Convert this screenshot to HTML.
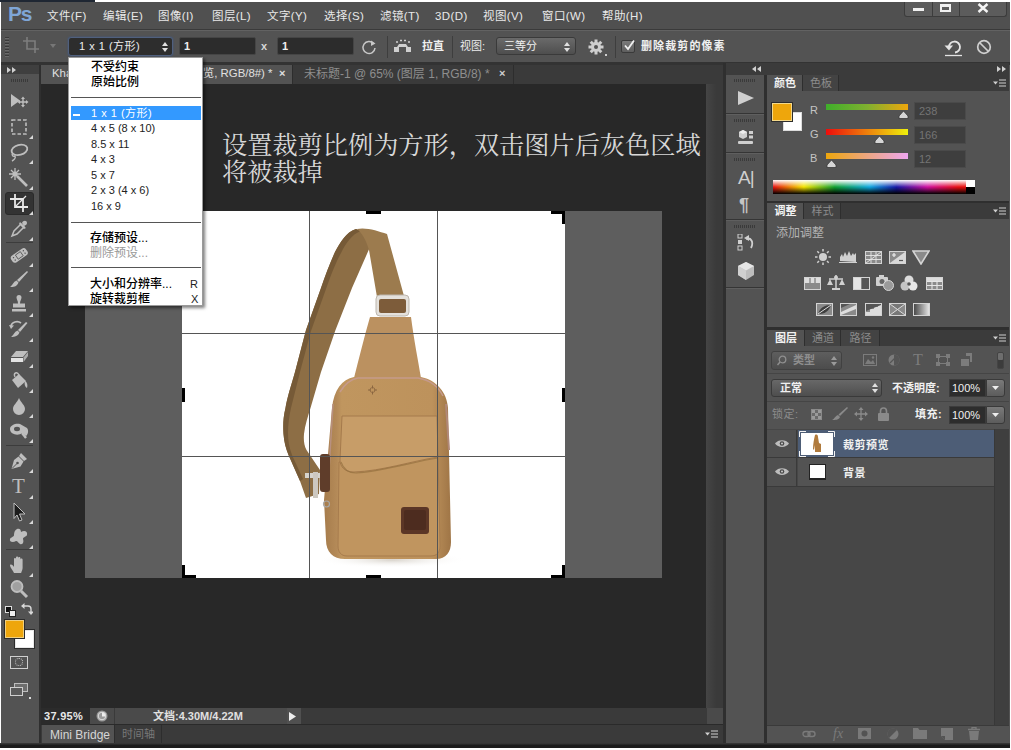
<!DOCTYPE html>
<html><head><meta charset="utf-8">
<style>
*{box-sizing:border-box;margin:0;padding:0}
html,body{width:1011px;height:750px;overflow:hidden;background:#fff}
body{font-family:"Liberation Sans","Noto Sans CJK SC",sans-serif;font-size:11px;color:#e6e6e6;position:relative}
.a{position:absolute}
.t{position:absolute;white-space:nowrap;line-height:1}
#app{position:absolute;left:1px;top:2px;width:1009px;height:741px;background:#535353;overflow:hidden}
/* coordinates inside #app are offset by (-1,-2); use wrapper to keep page coords */
#p{position:absolute;left:-1px;top:-2px;width:1011px;height:750px}
.m{top:11px;font-size:11.5px;letter-spacing:.4px;color:#e8e8e8}
.c{font-size:12px;font-weight:500;color:#000}
</style></head><body>
<div id="app"><div id="p">
<!--MENUBAR-->
<div class="a" id="menubar" style="left:1px;top:2px;width:1009px;height:27px;background:#505050"></div>
<div class="a" style="left:1px;top:29px;width:1009px;height:1px;background:#3a3a3a"></div>
<!--MENUCONTENT-->
<div class="t" style="left:8px;top:3px;font-size:21px;font-weight:bold;color:#7fa6d6;letter-spacing:-1.2px;font-family:'Liberation Sans',sans-serif">Ps</div>
<div class="t m" style="left:47px">文件(F)</div>
<div class="t m" style="left:103px">编辑(E)</div>
<div class="t m" style="left:158px">图像(I)</div>
<div class="t m" style="left:212px">图层(L)</div>
<div class="t m" style="left:267px">文字(Y)</div>
<div class="t m" style="left:324px">选择(S)</div>
<div class="t m" style="left:380px">滤镜(T)</div>
<div class="t m" style="left:435px">3D(D)</div>
<div class="t m" style="left:483px">视图(V)</div>
<div class="t m" style="left:542px">窗口(W)</div>
<div class="t m" style="left:602px">帮助(H)</div>
<!-- window buttons -->
<div class="a" style="left:904px;top:2px;width:103px;height:15px;background:#5c5c5c;border:1px solid #3c3c3c;border-top:none;border-radius:0 0 3px 3px"></div>
<div class="a" style="left:932px;top:2px;width:1px;height:15px;background:#3c3c3c"></div>
<div class="a" style="left:959px;top:2px;width:1px;height:15px;background:#3c3c3c"></div>
<div class="a" style="left:913px;top:8px;width:11px;height:3px;background:#f0f0f0"></div>
<div class="a" style="left:940px;top:4px;width:11px;height:8px;border:2px solid #f0f0f0;border-top-width:3px"></div>
<svg class="a" style="left:977px;top:3px" width="12" height="10" viewBox="0 0 12 10"><path d="M1.5 1 L10.5 9 M10.5 1 L1.5 9" stroke="#f4f4f4" stroke-width="2.4" fill="none"/></svg>
<!--OPTIONS-->
<div class="a" id="optbar" style="left:1px;top:30px;width:1009px;height:32px;background:#535353;border-top:1px solid #626262"></div>
<div class="a" style="left:1px;top:62px;width:1009px;height:3px;background:#333"></div>
<!--OPTCONTENT-->
<div class="a" style="left:5px;top:36px;width:4px;height:22px;background:repeating-linear-gradient(#535353 0 1px,#3a3a3a 1px 2px,#6a6a6a 2px 3px)"></div>
<svg class="a" style="left:22px;top:36px" width="18" height="18" viewBox="0 0 18 18"><path d="M5 1 V13 H17 M1 5 H13 V17" stroke="#7d7d7d" stroke-width="1.6" fill="none"/></svg>
<svg class="a" style="left:50px;top:44px" width="6" height="4"><path d="M0 0H6L3 4Z" fill="#777"/></svg>
<div class="a" style="left:68px;top:37px;width:105px;height:19px;background:#2d2d2d;border:1px solid #50607e;border-radius:3px;box-shadow:0 0 2px #3d5a8a"></div>
<div class="t" style="left:79px;top:41px;font-size:11px;letter-spacing:.5px;color:#ededed">1 x 1 (方形)</div>
<svg class="a" style="left:162px;top:42px" width="6" height="10"><path d="M0 4L3 0L6 4ZM0 6L3 10L6 6Z" fill="#e0e0e0"/></svg>
<div class="a" style="left:179px;top:37px;width:77px;height:18px;background:#2c2c2c;border:1px solid #454545;border-radius:2px"></div>
<div class="t" style="left:184px;top:41px;font-size:11px;font-weight:bold;color:#f0f0f0">1</div>
<div class="t" style="left:261px;top:41px;font-size:11px;font-weight:bold;color:#d8d8d8">x</div>
<div class="a" style="left:277px;top:37px;width:77px;height:18px;background:#2c2c2c;border:1px solid #454545;border-radius:2px"></div>
<div class="t" style="left:282px;top:41px;font-size:11px;font-weight:bold;color:#f0f0f0">1</div>
<svg class="a" style="left:361px;top:39px" width="16" height="16" viewBox="0 0 16 16"><path d="M12.5 4.5 A6 6 0 1 0 14 9" stroke="#c8c8c8" stroke-width="1.5" fill="none"/><path d="M10 1.5 L14.5 4.5 L10 7Z" fill="#c8c8c8"/></svg>
<div class="a" style="left:387px;top:36px;width:1px;height:22px;background:#3e3e3e"></div>
<svg class="a" style="left:393px;top:39px" width="19" height="15" viewBox="0 0 19 15"><path d="M1 13V8h3l2-3h7l2 3h3v5z" fill="#cfcfcf"/><rect x="6" y="8" width="7" height="5" fill="#535353"/><path d="M3 3h2M7 1.500h2M11 1.500h2M15 3h2" stroke="#cfcfcf" stroke-width="1.500"/></svg>
<div class="t" style="left:422px;top:41px;font-size:11px;font-weight:bold;color:#f0f0f0">拉直</div>
<div class="a" style="left:452px;top:36px;width:1px;height:22px;background:#3e3e3e"></div>
<div class="t" style="left:460px;top:41px;font-size:11px;color:#ececec">视图:</div>
<div class="a" style="left:496px;top:37px;width:80px;height:18px;background:linear-gradient(#6a6a6a,#4e4e4e);border:1px solid #3a3a3a;border-radius:3px"></div>
<div class="t" style="left:504px;top:41px;font-size:11px;color:#f0f0f0">三等分</div>
<svg class="a" style="left:564px;top:42px" width="6" height="10"><path d="M0 4L3 0L6 4ZM0 6L3 10L6 6Z" fill="#e0e0e0"/></svg>
<svg class="a" style="left:588px;top:39px" width="16" height="16" viewBox="-8 -8 16 16"><g fill="#cfcfcf"><circle r="5"/><g id="gt"><rect x="-1.500" y="-7.500" width="3" height="15"/></g><use href="#gt" transform="rotate(45)"/><use href="#gt" transform="rotate(90)"/><use href="#gt" transform="rotate(135)"/></g><circle r="2" fill="#535353"/></svg>
<div class="a" style="left:605px;top:54px;width:2px;height:2px;background:#cfcfcf"></div>
<div class="a" style="left:615px;top:36px;width:1px;height:22px;background:#3e3e3e"></div>
<div class="a" style="left:621px;top:40px;width:14px;height:13px;background:linear-gradient(#7a7a7a,#5e5e5e);border:1px solid #3a3a3a;border-radius:2px"></div>
<svg class="a" style="left:622px;top:39px" width="14" height="13" viewBox="0 0 14 13"><path d="M3 6.500L6 10L12 1.500" stroke="#f0f0f0" stroke-width="1.800" fill="none"/></svg>
<div class="t" style="left:641px;top:41px;font-size:11px;font-weight:bold;letter-spacing:1.1px;color:#f0f0f0">删除裁剪的像素</div>
<svg class="a" style="left:943px;top:38px" width="20" height="19" viewBox="0 0 20 19"><path d="M6 9 A5.500 5.500 0 1 1 12 14.500" stroke="#e4e4e4" stroke-width="1.800" fill="none"/><path d="M1.500 7.500H10L6 12.500Z" fill="#e4e4e4"/><path d="M2 17.500H19" stroke="#e4e4e4" stroke-width="1.300"/></svg>
<svg class="a" style="left:976px;top:39px" width="16" height="16" viewBox="0 0 16 16"><circle cx="8" cy="8" r="6.300" stroke="#cfcfcf" stroke-width="1.700" fill="none"/><path d="M3.500 3.500L12.500 12.500" stroke="#cfcfcf" stroke-width="1.700"/></svg>
<!--TOOLBAR-->
<div class="a" id="toolbar" style="left:1px;top:65px;width:38px;height:680px;background:#535353"></div>
<div class="a" style="left:39px;top:65px;width:2px;height:680px;background:#2f2f2f"></div>
<!--TOOLCONTENT-->
<div class="a" style="left:1px;top:65px;width:38px;height:9px;background:#3f3f3f"></div>
<svg class="a" style="left:7px;top:67px" width="9" height="6"><path d="M0 0L4 3L0 6ZM5 0L9 3L5 6Z" fill="#d0d0d0"/></svg>
<div class="a" style="left:11px;top:79px;width:18px;height:3px;background:repeating-linear-gradient(90deg,#3a3a3a 0 1px,#535353 1px 2px)"></div>
<svg class="a" style="left:9px;top:91px" width="20" height="20" viewBox="0 0 20 20" fill="#bebebe" stroke="none"><path d="M2 3L11 9.500L2 16Z"/><path d="M14 7v8M10 11h8" stroke="#bebebe" stroke-width="1.400"/><path d="M14 5.500l-2 2.500h4zM14 16.500l-2-2.500h4zM8.500 11l2.500-2v4zM19.500 11l-2.500-2v4z"/></svg>
<svg class="a" style="left:9px;top:117px" width="20" height="20" viewBox="0 0 20 20" fill="#bebebe" stroke="none"><rect x="3" y="3" width="14" height="14" fill="none" stroke="#bebebe" stroke-width="1.600" stroke-dasharray="3.500 2"/></svg>
<svg class="a" style="left:29px;top:135px" width="4" height="4"><path d="M4 0V4H0Z" fill="#d8d8d8"/></svg>
<svg class="a" style="left:9px;top:142px" width="20" height="20" viewBox="0 0 20 20" fill="#bebebe" stroke="none"><ellipse cx="10.500" cy="8" rx="8" ry="5" fill="none" stroke="#bebebe" stroke-width="1.800" transform="rotate(-15 10 8)"/><path d="M4 11c-2 2 0 4 2 3c1 2-1 4-3 5" fill="none" stroke="#bebebe" stroke-width="1.400"/></svg>
<svg class="a" style="left:29px;top:160px" width="4" height="4"><path d="M4 0V4H0Z" fill="#d8d8d8"/></svg>
<svg class="a" style="left:9px;top:168px" width="20" height="20" viewBox="0 0 20 20" fill="#bebebe" stroke="none"><path d="M8 8L18 18" stroke="#bebebe" stroke-width="2.600"/><path d="M6 0v12M0 6h12M2 2l8 8M10 2l-8 8" stroke="#bebebe" stroke-width="1.300"/><circle cx="6" cy="6" r="2.500"/></svg>
<svg class="a" style="left:29px;top:186px" width="4" height="4"><path d="M4 0V4H0Z" fill="#d8d8d8"/></svg>
<div class="a" style="left:5px;top:192px;width:29px;height:23px;background:#333;border-radius:3px;border:1px solid #2a2a2a"></div>
<svg class="a" style="left:9px;top:193px" width="20" height="20" viewBox="0 0 20 20" fill="#bebebe" stroke="none"><path d="M6 1V14H19M1 6H14V19" stroke="#e8e8e8" stroke-width="1.800" fill="none"/><path d="M17 3L7 13" stroke="#e8e8e8" stroke-width="1.200"/></svg>
<svg class="a" style="left:29px;top:211px" width="4" height="4"><path d="M4 0V4H0Z" fill="#d8d8d8"/></svg>
<svg class="a" style="left:9px;top:219px" width="20" height="20" viewBox="0 0 20 20" fill="#bebebe" stroke="none"><path d="M3 17L5 12L12 5L15 8L8 15Z" fill="none" stroke="#bebebe" stroke-width="1.500"/><path d="M11 3l6 6l-2 1l-5-5zM13 4c1-3 5-3 5 0c0 2-2 2-3 3z"/></svg>
<svg class="a" style="left:29px;top:237px" width="4" height="4"><path d="M4 0V4H0Z" fill="#d8d8d8"/></svg>
<div class="a" style="left:6px;top:242px;width:27px;height:1px;background:#3c3c3c"></div>
<svg class="a" style="left:9px;top:245px" width="20" height="20" viewBox="0 0 20 20" fill="#bebebe" stroke="none"><rect x="1" y="6.500" width="18" height="8" rx="3" transform="rotate(-35 10 10)"/><g fill="#535353" transform="rotate(-35 10 10)"><rect x="7" y="8" width="6" height="5" fill="none" stroke="#535353" stroke-width=".8"/><circle cx="4" cy="9" r=".7"/><circle cx="4" cy="12" r=".7"/><circle cx="16" cy="9" r=".7"/><circle cx="16" cy="12" r=".7"/></g></svg>
<svg class="a" style="left:29px;top:263px" width="4" height="4"><path d="M4 0V4H0Z" fill="#d8d8d8"/></svg>
<svg class="a" style="left:9px;top:270px" width="20" height="20" viewBox="0 0 20 20" fill="#bebebe" stroke="none"><path d="M18 1L19 2L10 12L8 10Z"/><path d="M7.500 10.500L9.500 12.500C8 17 4 17 1 17C4 15 4 12 7.500 10.500Z"/></svg>
<svg class="a" style="left:29px;top:288px" width="4" height="4"><path d="M4 0V4H0Z" fill="#d8d8d8"/></svg>
<svg class="a" style="left:9px;top:295px" width="20" height="20" viewBox="0 0 20 20" fill="#bebebe" stroke="none"><path d="M7.500 2.500a2.500 2.500 0 1 1 5 0c0 2-1.500 3-1.500 6h5v4h-12v-4h5c0-3-1.500-4-1.500-6z"/><rect x="3" y="14" width="14" height="2.500"/></svg>
<svg class="a" style="left:29px;top:313px" width="4" height="4"><path d="M4 0V4H0Z" fill="#d8d8d8"/></svg>
<svg class="a" style="left:9px;top:320px" width="20" height="20" viewBox="0 0 20 20" fill="#bebebe" stroke="none"><path d="M17 2L18.500 3L11 12L9 10Z"/><path d="M8.500 10.500L10.500 12.500C9 16 6 17 2 17C5 15 5 12 8.500 10.500Z"/><path d="M2 6a6 5 0 0 1 10-3" fill="none" stroke="#bebebe" stroke-width="1.600"/><path d="M0 5l5 .5l-3 3.500z"/></svg>
<svg class="a" style="left:29px;top:338px" width="4" height="4"><path d="M4 0V4H0Z" fill="#d8d8d8"/></svg>
<svg class="a" style="left:9px;top:346px" width="20" height="20" viewBox="0 0 20 20" fill="#bebebe" stroke="none"><path d="M7 5H19L14 11H2Z"/><path d="M2 12H14V16H2Z" fill="#e2e2e2"/><path d="M14.500 11.500L19 6V10L14.500 16Z" fill="#aaa"/></svg>
<svg class="a" style="left:29px;top:364px" width="4" height="4"><path d="M4 0V4H0Z" fill="#d8d8d8"/></svg>
<svg class="a" style="left:9px;top:371px" width="20" height="20" viewBox="0 0 20 20" fill="#bebebe" stroke="none"><path d="M3 9L10 3L17 10L9 17Z"/><path d="M6 6c-2-4 2-6 4-2" fill="none" stroke="#bebebe" stroke-width="1.400"/><path d="M16 10c2 1 3 4 2 7c-2-1-3-4-2-7z"/></svg>
<svg class="a" style="left:29px;top:389px" width="4" height="4"><path d="M4 0V4H0Z" fill="#d8d8d8"/></svg>
<svg class="a" style="left:9px;top:396px" width="20" height="20" viewBox="0 0 20 20" fill="#bebebe" stroke="none"><path d="M10 2C12 7 16 9 16 13a6 6 0 0 1-12 0C4 9 8 7 10 2Z"/></svg>
<svg class="a" style="left:29px;top:414px" width="4" height="4"><path d="M4 0V4H0Z" fill="#d8d8d8"/></svg>
<svg class="a" style="left:9px;top:421px" width="20" height="20" viewBox="0 0 20 20" fill="#bebebe" stroke="none"><path d="M1 8c0-4 6-6 10-5l7 4c2 2 1 7-1 8l-4-3c-3 3-12 2-12-4z"/><ellipse cx="8" cy="8" rx="3" ry="2.200" fill="#535353"/><path d="M13 12l4 5" stroke="#bebebe" stroke-width="2.400"/></svg>
<svg class="a" style="left:29px;top:439px" width="4" height="4"><path d="M4 0V4H0Z" fill="#d8d8d8"/></svg>
<div class="a" style="left:6px;top:445px;width:27px;height:1px;background:#3c3c3c"></div>
<svg class="a" style="left:9px;top:451px" width="20" height="20" viewBox="0 0 20 20" fill="#bebebe" stroke="none"><path d="M12 2l6 6l-3 2l-5-5z"/><path d="M9.500 5.500l5 5l-3 5l-9 2.500l2.500-9z"/><path d="M3 17.500l5-5" stroke="#535353" stroke-width="1"/><circle cx="8.500" cy="12" r="1.300" fill="#535353"/></svg>
<svg class="a" style="left:29px;top:469px" width="4" height="4"><path d="M4 0V4H0Z" fill="#d8d8d8"/></svg>
<div class="t" style="left:12px;top:476px;font-family:'Liberation Serif',serif;font-size:21px;color:#bebebe">T</div>
<svg class="a" style="left:29px;top:495px" width="4" height="4"><path d="M4 0V4H0Z" fill="#d8d8d8"/></svg>
<svg class="a" style="left:9px;top:502px" width="20" height="20" viewBox="0 0 20 20" fill="#bebebe" stroke="none"><path d="M5 1L16 12H10.500L13 18L10.500 19L8 13L5 16.500Z" fill="#1c1c1c" stroke="#bebebe" stroke-width="1"/></svg>
<svg class="a" style="left:29px;top:520px" width="4" height="4"><path d="M4 0V4H0Z" fill="#d8d8d8"/></svg>
<svg class="a" style="left:9px;top:527px" width="20" height="20" viewBox="0 0 20 20" fill="#bebebe" stroke="none"><path d="M8 2c2-1 4 0 4 3c3-2 7-1 6 3c-1 2-4 2-4 4c1 3 0 6-3 5c-2-1-2-3-4-3c-3 2-7 1-6-2c1-2 4-2 4-4c0-3 1-5 3-6z"/></svg>
<svg class="a" style="left:29px;top:545px" width="4" height="4"><path d="M4 0V4H0Z" fill="#d8d8d8"/></svg>
<div class="a" style="left:6px;top:549px;width:27px;height:1px;background:#3c3c3c"></div>
<svg class="a" style="left:9px;top:555px" width="20" height="20" viewBox="0 0 20 20" fill="#bebebe" stroke="none"><path d="M5 18c-1-3-4-5-4-8c1-1 3 0 4 2V4c0-1.500 2-1.500 2 0V2.500c0-1.500 2.200-1.500 2.200 0V3c0-1.500 2.200-1.500 2.200 0V4.500c0-1.500 2.200-1.500 2.200 0V13c0 2-1 3-1.500 5z"/></svg>
<svg class="a" style="left:29px;top:573px" width="4" height="4"><path d="M4 0V4H0Z" fill="#d8d8d8"/></svg>
<svg class="a" style="left:9px;top:579px" width="20" height="20" viewBox="0 0 20 20" fill="#bebebe" stroke="none"><circle cx="8" cy="7.500" r="5.500" fill="#a0a0a0" stroke="#bebebe" stroke-width="1.800"/><path d="M12 12l6 6" stroke="#bebebe" stroke-width="3"/></svg>
<div class="a" style="left:5px;top:606px;width:7px;height:7px;background:#111;border:1px solid #ddd"></div><div class="a" style="left:9px;top:610px;width:7px;height:7px;background:#eee;border:1px solid #222"></div>
<svg class="a" style="left:21px;top:603px" width="12" height="12" viewBox="0 0 12 12"><path d="M2 3h5a3 3 0 0 1 3 3v3" fill="none" stroke="#d8d8d8" stroke-width="1.400"/><path d="M3.500 0L0 3l3.500 3zM7 8.500l3 3.500l3-3.500z" fill="#d8d8d8"/></svg>
<div class="a" style="left:15px;top:630px;width:19px;height:18px;background:#fff;border:1px solid #e8e8e8;box-shadow:0 0 0 1px #2c2c2c"></div>
<div class="a" style="left:5px;top:620px;width:19px;height:18px;background:#eea60c;border:1px solid #f0d080;box-shadow:0 0 0 1px #2c2c2c"></div>
<div class="a" style="left:10px;top:656px;width:18px;height:13px;border:1px solid #cfcfcf"></div><div class="a" style="left:15px;top:658px;width:8px;height:8px;border:1px dotted #cfcfcf;border-radius:50%"></div>
<div class="a" style="left:14px;top:683px;width:14px;height:9px;border:1px solid #bdbdbd;background:#6e6e6e"></div><div class="a" style="left:10px;top:687px;width:13px;height:9px;border:1px solid #cfcfcf;background:#5a5a5a"></div><div class="a" style="left:29px;top:697px;width:2px;height:2px;background:#ddd"></div>
<!--TABROW-->
<div class="a" id="tabrow" style="left:41px;top:65px;width:682px;height:19px;background:#3a3a3a"></div>
<!--TABCONTENT-->
<div class="a" style="left:41px;top:65px;width:252px;height:19px;background:#535353;border-right:1px solid #2d2d2d"></div>
<div class="t" style="left:52px;top:68px;font-size:11.4px;color:#e0e0e0">Khaki bag.jpg @ 38% (裁剪预览, RGB/8#) *</div>
<div class="t" style="left:279px;top:68px;font-size:11px;font-weight:bold;color:#e0e0e0">×</div>
<div class="t" style="left:304px;top:68px;font-size:12px;color:#8e8e8e">未标题-1 @ 65% (图层 1, RGB/8) *</div>
<div class="t" style="left:499px;top:68px;font-size:11px;font-weight:bold;color:#d0d0d0">×</div>
<div class="a" style="left:513px;top:65px;width:1px;height:19px;background:#2d2d2d"></div>
<!--CANVAS-->
<div class="a" id="canvas" style="left:41px;top:84px;width:665px;height:624px;background:#282828"></div>
<div class="a" id="vscroll" style="left:706px;top:84px;width:17px;height:624px;background:linear-gradient(90deg,#454545,#3a3a3a 60%)"></div>
<!--CANVASCONTENT-->
<div class="t" style="left:222px;top:132px;font-family:'Liberation Serif','Noto Serif CJK SC',serif;font-size:25.2px;line-height:27px;color:#d8d8d8;white-space:pre">设置裁剪比例为方形，双击图片后灰色区域
将被裁掉</div>
<div class="a" style="left:85px;top:211px;width:577px;height:367px;background:#5e5e5e"></div>
<div class="a" style="left:182px;top:211px;width:383px;height:367px;background:#fff"></div>
<svg class="a" style="left:182px;top:211px" width="383" height="367" viewBox="182 211 383 367">
<defs>
<linearGradient id="gb" x1="0" x2="1" y1="0" y2="0"><stop offset="0" stop-color="#a67c4c"/><stop offset=".1" stop-color="#b48a58"/><stop offset=".14" stop-color="#c0965f"/><stop offset=".85" stop-color="#bd925c"/><stop offset="1" stop-color="#9f7546"/></linearGradient>
<radialGradient id="sh" cx=".5" cy=".5" r=".5"><stop offset="0" stop-color="#d9d4cc"/><stop offset="1" stop-color="#fff" stop-opacity="0"/></radialGradient>
</defs>
<ellipse cx="392" cy="560" rx="75" ry="8" fill="url(#sh)"/>
<!-- left strap -->
<path d="M356 229 C346 232 340 243 335 252 C330 263 325 276 321 288 L306 330 L295 372 C291 386 287 398 285.500 408 C283 418 283 426 283.500 434 C284 442 286 449 288.500 455 L300 481 L306 498 L319 494 L320 470 L306.500 450 C304 445 303.500 440 304 434 C305 425 308 416 310.500 408 L321 372 L335.500 330 L352 288 L370 247 L372 236 Z" fill="#8d6e45"/>
<path d="M356 229 C346 232 340 243 335 252 C330 263 325 276 321 288 L306 330 L295 372 C291 386 287 398 285.500 408 C283 418 283 426 283.500 434 C284 442 286 449 288.500 455 L300 481 L303 479 L292 455 C289 447 288 440 288 433 C288 425 289 417 291 408 L300 372 L311 331 L326 289 C331 275 336 262 341 253 C346 243 352 234 361 231 Z" fill="#765a37"/>
<!-- right strap -->
<path d="M357 229 C366 227 378 231 387 234 L404 296 L377 297 L369 250 C366 240 362 233 357 229Z" fill="#9c7b4e"/>
<!-- buckle -->
<rect x="376" y="295" width="33" height="21" rx="4" fill="#e4e1dc" stroke="#bdb7ae" stroke-width="1"/>
<rect x="379" y="299" width="27" height="14" rx="2" fill="#7d5c3a"/>
<!-- neck -->
<path d="M370 317 L411 317 C414 340 418 360 421 378 L354 378 C359 358 364 338 370 317Z" fill="#bb9160"/>
<!-- body -->
<path d="M354 377 C342 379 334 390 332 408 L324 500 L326 540 C326 552 333 559 345 559 L436 559 C446 559 451 552 451 542 L448 408 C447 392 436 380 421 377 Z" fill="url(#gb)"/>
<path d="M340 392 C346 382 352 379 358 378 L418 378 C430 380 438 386 443 396" stroke="#c59a8c" stroke-width="1.500" fill="none"/>
<path d="M333 404 L329 470" stroke="#b89080" stroke-width="1.500" fill="none"/>
<path d="M446 404 L449 450" stroke="#b08878" stroke-width="2" fill="none"/>
<!-- front pocket -->
<path d="M339 462 L338 546 C338 552 341 556 347 556 L431 556 C437 556 440 552 440 546 L438 455 Z" fill="#c0955f" stroke="#a67b4d" stroke-width="1"/>
<!-- flap -->
<path d="M342 416 L437 416 L438 457 C412 461 382 471 354 472 C345 472 340 467 340 460 Z" fill="#c79d68" stroke="#a57a4c" stroke-width="1"/>
<path d="M341 462 C344 471 350 473 356 473 C384 471 412 462 438 458" stroke="#94703f" stroke-width="1.200" fill="none" opacity=".7"/>
<!-- label -->
<rect x="401" y="507" width="28" height="27" rx="3" fill="#5b3626"/>
<rect x="404" y="510" width="22" height="20" rx="2" fill="#4d2c1f"/>
<!-- lower buckle -->
<rect x="320" y="454" width="10" height="38" rx="3" fill="#5f3d2a"/>
<rect x="305" y="473" width="15" height="5" fill="#d6d3cd"/>
<rect x="313" y="472" width="5" height="26" fill="#cdc8c0"/>
<circle cx="326.500" cy="504" r="3" fill="none" stroke="#a8a8a8" stroke-width="1.200"/>
<!-- small emblem -->
<path d="M368 390h3m3 0h3M372.500 385.500v3m0 3v3" stroke="#8a6640" stroke-width="1"/><circle cx="372.500" cy="390" r="2.500" fill="none" stroke="#8a6640" stroke-width=".8"/>
</svg>
<!-- grid -->
<div class="a" style="left:309px;top:211px;width:1px;height:367px;background:#555"></div>
<div class="a" style="left:437px;top:211px;width:1px;height:367px;background:#555"></div>
<div class="a" style="left:182px;top:333px;width:383px;height:1px;background:#555"></div>
<div class="a" style="left:182px;top:456px;width:383px;height:1px;background:#555"></div>
<!-- handles -->
<div class="a" style="left:182px;top:211px;width:14px;height:3px;background:#000"></div><div class="a" style="left:182px;top:211px;width:3px;height:13px;background:#000"></div>
<div class="a" style="left:551px;top:211px;width:14px;height:3px;background:#000"></div><div class="a" style="left:562px;top:211px;width:3px;height:13px;background:#000"></div>
<div class="a" style="left:182px;top:575px;width:14px;height:3px;background:#000"></div><div class="a" style="left:182px;top:565px;width:3px;height:13px;background:#000"></div>
<div class="a" style="left:551px;top:575px;width:14px;height:3px;background:#000"></div><div class="a" style="left:562px;top:565px;width:3px;height:13px;background:#000"></div>
<div class="a" style="left:366px;top:211px;width:15px;height:3px;background:#000"></div>
<div class="a" style="left:366px;top:575px;width:15px;height:3px;background:#000"></div>
<div class="a" style="left:182px;top:388px;width:3px;height:14px;background:#000"></div>
<div class="a" style="left:562px;top:388px;width:3px;height:14px;background:#000"></div>
<!--STATUS-->
<div class="a" id="status" style="left:41px;top:708px;width:682px;height:16px;background:#3a3a3a"></div>
<div class="a" id="minib" style="left:41px;top:725px;width:682px;height:19px;background:#3a3a3a"></div>
<div class="a" style="left:41px;top:708px;width:49px;height:16px;background:#2b2b2b"></div><div class="a" style="left:90px;top:708px;width:24px;height:16px;background:#4a4a4a"></div>
<div class="t" style="left:44px;top:711px;font-size:11px;font-weight:bold;color:#e8e8e8;letter-spacing:.3px">37.95%</div>
<svg class="a" style="left:96px;top:710px" width="12" height="12" viewBox="0 0 12 12"><circle cx="6" cy="6" r="5.500" fill="#9a9a9a"/><path d="M6 2V6.500H9.500A3.500 3.500 0 0 0 6 2Z" fill="#eee"/><circle cx="6" cy="6" r="3.800" fill="none" stroke="#ddd" stroke-width="1"/></svg>
<div class="a" style="left:115px;top:708px;width:172px;height:16px;background:#4a4a4a"></div><div class="a" style="left:287px;top:708px;width:14px;height:16px;background:#505050"></div>
<div class="t" style="left:153px;top:711px;font-size:11px;font-weight:bold;color:#e0e0e0">文档:4.30M/4.22M</div>
<svg class="a" style="left:289px;top:712px" width="7" height="9"><path d="M0 0L7 4.500L0 9Z" fill="#eee"/></svg>

<div class="a" style="left:41px;top:724px;width:682px;height:1px;background:#2a2a2a"></div>
<div class="a" style="left:42px;top:725px;width:72px;height:19px;background:#535353"></div><div class="a" style="left:114px;top:725px;width:1px;height:19px;background:#2d2d2d"></div>
<div class="t" style="left:50px;top:729px;font-size:12px;color:#d6d6d6">Mini Bridge</div>
<div class="t" style="left:122px;top:729px;font-size:11px;color:#787878">时间轴</div>
<div class="a" style="left:161px;top:725px;width:1px;height:19px;background:#2d2d2d"></div>
<div class="a" style="left:707px;top:708px;width:16px;height:16px;background:#4a4a4a"></div>
<svg class="a" style="left:705px;top:730px" width="13" height="8" viewBox="0 0 13 8"><path d="M0 2.500H5L2.500 5.500Z" fill="#d0d0d0"/><path d="M6 1H13M6 4H13M6 7H13" stroke="#d0d0d0" stroke-width="1.200"/></svg>
<!--DOCK-->
<div class="a" id="dock" style="left:726px;top:63px;width:38px;height:682px;background:#535353"></div>
<div class="a" style="left:723px;top:63px;width:3px;height:682px;background:#2f2f2f"></div>
<div class="a" style="left:764px;top:63px;width:3px;height:682px;background:#2f2f2f"></div>
<!--DOCKCONTENT-->
<div class="a" style="left:726px;top:63px;width:283px;height:12px;background:#3b3b3b"></div>
<svg class="a" style="left:752px;top:66px" width="9" height="6"><path d="M4 0L0 3L4 6ZM9 0L5 3L9 6Z" fill="#d0d0d0"/></svg>
<svg class="a" style="left:997px;top:66px" width="9" height="6"><path d="M0 0L4 3L0 6ZM5 0L9 3L5 6Z" fill="#d0d0d0"/></svg>
<div class="a" style="left:734px;top:79px;width:22px;height:3px;background:repeating-linear-gradient(90deg,#3a3a3a 0 1px,#535353 1px 2px)"></div>
<svg class="a" style="left:738px;top:91px" width="16" height="14"><path d="M0 0L16 7L0 14Z" fill="#cfcfcf"/></svg>
<div class="a" style="left:726px;top:113px;width:38px;height:1px;background:#353535"></div><div class="a" style="left:726px;top:114px;width:38px;height:1px;background:#5f5f5f"></div>
<div class="a" style="left:734px;top:119px;width:22px;height:3px;background:repeating-linear-gradient(90deg,#3a3a3a 0 1px,#535353 1px 2px)"></div>
<svg class="a" style="left:738px;top:129px" width="16" height="16" viewBox="0 0 16 16" fill="#cfcfcf"><path d="M5 1L9 3V8L5 10L1 8V3Z"/><path d="M5 1L9 3L5 5L1 3Z" fill="#eee"/><rect x="11" y="2" width="4" height="3"/><rect x="11" y="6.500" width="4" height="3"/><rect x="0" y="12" width="15" height="3" rx="1"/></svg>
<div class="a" style="left:726px;top:152px;width:38px;height:1px;background:#353535"></div><div class="a" style="left:726px;top:153px;width:38px;height:1px;background:#5f5f5f"></div>
<div class="a" style="left:734px;top:158px;width:22px;height:3px;background:repeating-linear-gradient(90deg,#3a3a3a 0 1px,#535353 1px 2px)"></div>
<div class="t" style="left:738px;top:168px;font-size:19px;color:#cfcfcf;letter-spacing:-1px">A|</div>
<div class="t" style="left:739px;top:196px;font-size:18px;font-weight:bold;color:#c4c4c4">¶</div>
<div class="a" style="left:726px;top:219px;width:38px;height:1px;background:#353535"></div><div class="a" style="left:726px;top:220px;width:38px;height:1px;background:#5f5f5f"></div>
<div class="a" style="left:734px;top:225px;width:22px;height:3px;background:repeating-linear-gradient(90deg,#3a3a3a 0 1px,#535353 1px 2px)"></div>
<svg class="a" style="left:737px;top:234px" width="17" height="18" viewBox="0 0 17 18" fill="#cfcfcf"><rect x="1" y="0" width="4" height="4" fill="none" stroke="#cfcfcf"/><rect x="1" y="6" width="4" height="4"/><rect x="1" y="12" width="4" height="4" fill="none" stroke="#cfcfcf"/><path d="M9 5c5-2 8 3 5 9" fill="none" stroke="#cfcfcf" stroke-width="1.800"/><path d="M7 4l5-3v6z"/></svg>
<svg class="a" style="left:738px;top:262px" width="16" height="18" viewBox="0 0 16 18"><path d="M8 0L16 4V13L8 18L0 13V4Z" fill="#bdbdbd"/><path d="M8 0L16 4L8 8.500L0 4Z" fill="#e6e6e6"/><path d="M8 8.500V18L0 13V4Z" fill="#d0d0d0"/></svg>
<div class="a" style="left:726px;top:287px;width:38px;height:1px;background:#353535"></div><div class="a" style="left:726px;top:288px;width:38px;height:1px;background:#5f5f5f"></div>
<!--PANELS-->
<div class="a" id="panels" style="left:767px;top:63px;width:242px;height:682px;background:#535353"></div>
<div class="a" style="left:68px;top:57px;width:135px;height:249px;background:#fff;border:1px solid #9a9a9a;box-shadow:2px 2px 3px rgba(0,0,0,.5);color:#111;font-size:11px">
<div class="t c" style="left:22px;top:3px">不受约束</div>
<div class="t c" style="left:22px;top:18px">原始比例</div>
<div class="a" style="left:2px;top:39px;width:130px;height:1px;background:#555"></div>
<div class="a" style="left:2px;top:48px;width:130px;height:14px;background:#3399ff"></div>
<div class="a" style="left:4px;top:56px;width:7px;height:2px;background:#fff"></div>
<div class="t" style="left:22px;top:50px;color:#fff;letter-spacing:.5px">1 x 1 (方形)</div>
<div class="t" style="left:22px;top:65px;color:#222">4 x 5 (8 x 10)</div>
<div class="t" style="left:22px;top:81px;color:#222">8.5 x 11</div>
<div class="t" style="left:22px;top:96px;color:#222">4 x 3</div>
<div class="t" style="left:22px;top:112px;color:#222">5 x 7</div>
<div class="t" style="left:22px;top:127px;color:#222">2 x 3 (4 x 6)</div>
<div class="t" style="left:22px;top:143px;color:#222">16 x 9</div>
<div class="a" style="left:2px;top:164px;width:130px;height:1px;background:#555"></div>
<div class="t c" style="left:21px;top:174px">存储预设...</div>
<div class="t" style="left:21px;top:189px;font-size:12px;color:#999">删除预设...</div>
<div class="a" style="left:2px;top:209px;width:130px;height:1px;background:#555"></div>
<div class="t c" style="left:21px;top:220px">大小和分辨率...</div><div class="t" style="left:121px;top:221px;color:#222">R</div>
<div class="t c" style="left:21px;top:235px">旋转裁剪框</div><div class="t" style="left:122px;top:236px;color:#222">X</div>
</div>
<!--PANELCONTENT-->
<div class="a" style="left:767px;top:63px;width:242px;height:12px;background:#3b3b3b"></div>
<svg class="a" style="left:997px;top:66px" width="9" height="6"><path d="M0 0L4 3L0 6ZM5 0L9 3L5 6Z" fill="#d0d0d0"/></svg>
<div class="a" style="left:767px;top:75px;width:242px;height:16px;background:#3b3b3b"></div>
<div class="a" style="left:767px;top:75px;width:36px;height:16px;background:#535353;border-right:1px solid #2e2e2e"></div>
<div class="t" style="left:767px;top:78px;font-size:11px;font-weight:bold;color:#f2f2f2;width:36px;text-align:center">颜色</div>
<div class="a" style="left:803px;top:75px;width:36px;height:16px;background:#434343;border-right:1px solid #2e2e2e"></div>
<div class="t" style="left:803px;top:78px;font-size:11px;color:#8c8c8c;width:36px;text-align:center">色板</div>
<svg class="a" style="left:993px;top:79px" width="13" height="8" viewBox="0 0 13 8"><path d="M0 2.500H5L2.500 5.500Z" fill="#d0d0d0"/><path d="M6 1H13M6 4H13M6 7H13" stroke="#d0d0d0" stroke-width="1.200"/></svg>
<div class="a" style="left:783px;top:112px;width:19px;height:19px;background:#fff;border:1px solid #dcdcdc"></div>
<div class="a" style="left:772px;top:103px;width:20px;height:18px;background:#eea60c;border:1px solid #f5d98a;box-shadow:0 0 0 1px #2e2e2e"></div>
<div class="t" style="left:810px;top:105px;font-size:11px;color:#c4c4c4">R</div>
<div class="t" style="left:810px;top:129px;font-size:11px;color:#c4c4c4">G</div>
<div class="t" style="left:810px;top:153px;font-size:11px;color:#c4c4c4">B</div>
<div class="a" style="left:826px;top:104px;width:82px;height:6px;background:linear-gradient(90deg,#3fae2a,#7fb030 50%,#eea60c)"></div>
<div class="a" style="left:826px;top:129px;width:82px;height:6px;background:linear-gradient(90deg,#ee0c0c,#ee800c 50%,#eef00c)"></div>
<div class="a" style="left:826px;top:153px;width:82px;height:6px;background:linear-gradient(90deg,#eea60c,#eea680 50%,#eea6f0)"></div>
<svg class="a" style="left:898px;top:111px" width="11" height="8" viewBox="0 0 11 8"><path d="M5.500 0L10 5V7.500H1V5Z" fill="#d6d6d6" stroke="#3a3a3a" stroke-width=".8"/></svg>
<svg class="a" style="left:874px;top:136px" width="11" height="8" viewBox="0 0 11 8"><path d="M5.500 0L10 5V7.500H1V5Z" fill="#d6d6d6" stroke="#3a3a3a" stroke-width=".8"/></svg>
<svg class="a" style="left:826px;top:160px" width="11" height="8" viewBox="0 0 11 8"><path d="M5.500 0L10 5V7.500H1V5Z" fill="#d6d6d6" stroke="#3a3a3a" stroke-width=".8"/></svg>
<div class="a" style="left:914px;top:102px;width:52px;height:18px;background:#3e3e3e;border:1px solid #4a4a4a"></div>
<div class="t" style="left:919px;top:106px;font-size:11px;color:#747474">238</div>
<div class="a" style="left:914px;top:126px;width:52px;height:18px;background:#3e3e3e;border:1px solid #4a4a4a"></div>
<div class="t" style="left:919px;top:130px;font-size:11px;color:#747474">166</div>
<div class="a" style="left:914px;top:150px;width:52px;height:18px;background:#3e3e3e;border:1px solid #4a4a4a"></div>
<div class="t" style="left:919px;top:154px;font-size:11px;color:#747474">12</div>
<div class="a" style="left:773px;top:180px;width:193px;height:14px;background:linear-gradient(rgba(255,255,255,1),rgba(255,255,255,0) 50%,rgba(0,0,0,0) 50%,rgba(0,0,0,1)),linear-gradient(90deg,#e81010,#f4e400 16%,#10a030 32%,#10a8e0 50%,#1818a8 64%,#d010a0 80%,#e81010 96%)"></div>
<div class="a" style="left:966px;top:180px;width:9px;height:7px;background:#fff"></div><div class="a" style="left:966px;top:187px;width:9px;height:7px;background:#000"></div>
<div class="a" style="left:767px;top:201px;width:242px;height:2px;background:#2f2f2f"></div>
<div class="a" style="left:767px;top:203px;width:242px;height:16px;background:#3b3b3b"></div>
<div class="a" style="left:767px;top:203px;width:37px;height:16px;background:#535353;border-right:1px solid #2e2e2e"></div>
<div class="t" style="left:767px;top:206px;font-size:11px;font-weight:bold;color:#f2f2f2;width:37px;text-align:center">调整</div>
<div class="a" style="left:804px;top:203px;width:37px;height:16px;background:#434343;border-right:1px solid #2e2e2e"></div>
<div class="t" style="left:804px;top:206px;font-size:11px;color:#8c8c8c;width:37px;text-align:center">样式</div>
<svg class="a" style="left:993px;top:207px" width="13" height="8" viewBox="0 0 13 8"><path d="M0 2.500H5L2.500 5.500Z" fill="#d0d0d0"/><path d="M6 1H13M6 4H13M6 7H13" stroke="#d0d0d0" stroke-width="1.200"/></svg>
<div class="t" style="left:776px;top:227px;font-size:12px;color:#b4b4b4">添加调整</div>
<svg class="a" style="left:814px;top:248px" width="18" height="18" viewBox="-9 -9 18 18"><circle r="4" fill="#d0d0d0"/><path d="M0-8V-5.500M0 8V5.500M-8 0H-5.500M8 0H5.500M-5.700-5.700L-4-4M5.700 5.700L4 4M-5.700 5.700L-4 4M5.700-5.700L4-4" stroke="#d0d0d0" stroke-width="1.500"/></svg>
<svg class="a" style="left:839px;top:251px" width="18" height="12" viewBox="0 0 18 12"><path d="M1 10V6l2-3l1 3l2-5l2 4l2-5l2 5l2-3l1 2l2-2v9z" fill="#d0d0d0"/><path d="M0 11.500H18" stroke="#d0d0d0"/></svg>
<svg class="a" style="left:865px;top:251px" width="17" height="13" viewBox="0 0 17 13"><rect x=".5" y=".5" width="16" height="12" fill="#8a8a8a" stroke="#d4d4d4"/><path d="M1 12L16 1M1 4.500H16M1 8.500H16M6 1V12M11 1V12" stroke="#e6e6e6" stroke-width=".9" fill="none"/></svg>
<svg class="a" style="left:889px;top:251px" width="17" height="13" viewBox="0 0 17 13"><rect x=".5" y=".5" width="16" height="12" fill="#8a8a8a" stroke="#d4d4d4"/><path d="M16 1V12H1Z" fill="#d8d8d8"/><path d="M3 4H7M5 2V6" stroke="#eee" stroke-width="1.200"/><path d="M10 9.500H14" stroke="#555" stroke-width="1.200"/></svg>
<svg class="a" style="left:912px;top:250px" width="18" height="15" viewBox="0 0 18 15"><path d="M1 1H17L9 14Z" fill="#8a8a8a" stroke="#d4d4d4" stroke-width="1.600"/></svg>
<svg class="a" style="left:804px;top:277px" width="17" height="13" viewBox="0 0 17 13"><rect x=".5" y=".5" width="16" height="12" fill="#8a8a8a" stroke="#d4d4d4"/><rect x="1" y="1" width="15" height="5" fill="#ddd"/><path d="M6 1V6M11 1V6" stroke="#666"/></svg>
<svg class="a" style="left:827px;top:275px" width="18" height="16" viewBox="0 0 18 16" fill="#d0d0d0"><path d="M9 0V13M2 4H16" stroke="#d0d0d0" stroke-width="1.500"/><path d="M0 10H6L3 4ZM12 10H18L15 4Z"/><rect x="5" y="13" width="8" height="2"/><circle cx="9" cy="2.500" r="2"/></svg>
<svg class="a" style="left:853px;top:277px" width="17" height="13" viewBox="0 0 17 13"><rect x=".5" y=".5" width="16" height="12" fill="#8a8a8a" stroke="#d4d4d4"/><rect x="1" y="1" width="7.500" height="11" fill="#e4e4e4"/><rect x="8.500" y="1" width="7.500" height="11" fill="#555"/></svg>
<svg class="a" style="left:876px;top:275px" width="18" height="16" viewBox="0 0 18 16"><rect x="0" y="2" width="12" height="9" rx="1" fill="#d0d0d0"/><rect x="3" y="0" width="5" height="3" fill="#d0d0d0"/><circle cx="6" cy="6.500" r="2.500" fill="#666"/><circle cx="12.500" cy="10.500" r="5" fill="#9a9a9a" stroke="#d6d6d6"/></svg>
<svg class="a" style="left:900px;top:275px" width="18" height="16" viewBox="0 0 18 16"><circle cx="9" cy="5" r="4.500" fill="#dcdcdc"/><circle cx="5" cy="11" r="4.500" fill="#c4c4c4"/><circle cx="13" cy="11" r="4.500" fill="#e8e8e8"/><circle cx="9" cy="9" r="1.800" fill="#555"/></svg>
<svg class="a" style="left:926px;top:277px" width="17" height="13" viewBox="0 0 17 13"><rect x=".5" y=".5" width="16" height="12" fill="#8a8a8a" stroke="#d4d4d4"/><path d="M1 4.500H16M1 8.500H16M6 1V12M11 1V12" stroke="#e6e6e6" stroke-width="1.100" fill="none"/><rect x="1" y="1" width="15" height="3" fill="#ddd"/></svg>
<svg class="a" style="left:816px;top:303px" width="17" height="13" viewBox="0 0 17 13"><rect x=".5" y=".5" width="16" height="12" fill="#8a8a8a" stroke="#d4d4d4"/><path d="M2 11C5 2 12 2 15 2C12 11 5 11 2 11Z" fill="#3e3e3e"/><path d="M2 11L15 2" stroke="#ddd"/></svg>
<svg class="a" style="left:840px;top:303px" width="17" height="13" viewBox="0 0 17 13"><rect x=".5" y=".5" width="16" height="12" fill="#8a8a8a" stroke="#d4d4d4"/><path d="M1 9L16 2V6L1 12Z" fill="#ddd"/><path d="M1 5L10 1H1Z" fill="#555"/></svg>
<svg class="a" style="left:865px;top:303px" width="17" height="13" viewBox="0 0 17 13"><rect x=".5" y=".5" width="16" height="12" fill="#8a8a8a" stroke="#d4d4d4"/><path d="M1 9L5 9L5 6L9 6L9 4L13 4L13 2L16 2V12H1Z" fill="#ddd"/><path d="M1 1H16V2L1 8Z" fill="#555"/></svg>
<svg class="a" style="left:889px;top:303px" width="17" height="13" viewBox="0 0 17 13"><rect x=".5" y=".5" width="16" height="12" fill="#8a8a8a" stroke="#d4d4d4"/><path d="M1 1L8.500 6.500L16 1ZM1 12L8.500 6.500L16 12Z" fill="#777"/><path d="M1 1L16 12M16 1L1 12" stroke="#ddd"/></svg>
<svg class="a" style="left:913px;top:303px" width="17" height="13"><defs><linearGradient id="gg"><stop offset="0" stop-color="#444"/><stop offset="1" stop-color="#e8e8e8"/></linearGradient></defs><rect x=".5" y=".5" width="16" height="12" fill="url(#gg)" stroke="#d4d4d4"/></svg>
<div class="a" style="left:767px;top:327px;width:242px;height:3px;background:#2f2f2f"></div>
<div class="a" style="left:767px;top:330px;width:242px;height:16px;background:#3b3b3b"></div>
<div class="a" style="left:767px;top:330px;width:38px;height:16px;background:#535353;border-right:1px solid #2e2e2e"></div>
<div class="t" style="left:767px;top:333px;font-size:11px;font-weight:bold;color:#f2f2f2;width:38px;text-align:center">图层</div>
<div class="a" style="left:805px;top:330px;width:36px;height:16px;background:#434343;border-right:1px solid #2e2e2e"></div>
<div class="t" style="left:805px;top:333px;font-size:11px;color:#8c8c8c;width:36px;text-align:center">通道</div>
<div class="a" style="left:841px;top:330px;width:39px;height:16px;background:#434343;border-right:1px solid #2e2e2e"></div>
<div class="t" style="left:841px;top:333px;font-size:11px;color:#8c8c8c;width:39px;text-align:center">路径</div>
<svg class="a" style="left:993px;top:334px" width="13" height="8" viewBox="0 0 13 8"><path d="M0 2.500H5L2.500 5.500Z" fill="#d0d0d0"/><path d="M6 1H13M6 4H13M6 7H13" stroke="#d0d0d0" stroke-width="1.200"/></svg>
<div class="a" style="left:771px;top:351px;width:71px;height:19px;background:linear-gradient(#5e5e5e,#4c4c4c);border:1px solid #414141;border-radius:3px"></div>
<svg class="a" style="left:777px;top:355px" width="10" height="11" viewBox="0 0 10 11"><circle cx="5.500" cy="4.500" r="3.300" fill="none" stroke="#8f8f8f" stroke-width="1.300"/><path d="M3 7L.5 10" stroke="#8f8f8f" stroke-width="1.400"/></svg>
<div class="t" style="left:793px;top:355px;font-size:11px;font-weight:bold;color:#8e8e8e">类型</div>
<svg class="a" style="left:831px;top:356px" width="6" height="10"><path d="M0 4L3 0L6 4ZM0 6L3 10L6 6Z" fill="#9a9a9a"/></svg>
<svg class="a" style="left:863px;top:354px" width="14" height="12" viewBox="0 0 14 12"><rect x=".5" y=".5" width="13" height="11" fill="none" stroke="#7c7c7c"/><path d="M2 10L5 5L8 8L10 6L12 10Z" fill="#7c7c7c"/><circle cx="10" cy="3.500" r="1.200" fill="#7c7c7c"/></svg>
<svg class="a" style="left:888px;top:354px" width="12" height="12" viewBox="0 0 12 12"><circle cx="6" cy="6" r="5.500" fill="#7c7c7c"/><path d="M6 .5A5.500 5.500 0 0 1 6 11.500" fill="#555"/><path d="M2 9L9 2" stroke="#555" stroke-width="1.200"/></svg>
<div class="t" style="left:913px;top:352px;font-family:'Liberation Serif',serif;font-size:16px;color:#7c7c7c">T</div>
<svg class="a" style="left:936px;top:354px" width="14" height="12" viewBox="0 0 14 12"><rect x="2.500" y="2.500" width="9" height="7" fill="none" stroke="#7c7c7c"/><g fill="#7c7c7c"><rect x="0" y="0" width="4" height="4"/><rect x="10" y="0" width="4" height="4"/><rect x="0" y="8" width="4" height="4"/><rect x="10" y="8" width="4" height="4"/></g></svg>
<svg class="a" style="left:961px;top:353px" width="13" height="13" viewBox="0 0 13 13" fill="#7c7c7c"><path d="M5 0H11V9H9V3H5Z"/><rect x="0" y="6" width="8" height="7"/></svg>
<div class="a" style="left:997px;top:352px;width:7px;height:17px;background:#3c3c3c;border:1px solid #444;border-radius:2px"></div><div class="a" style="left:998px;top:353px;width:5px;height:7px;background:#6e6e6e;border-radius:1px"></div>
<div class="a" style="left:767px;top:373px;width:242px;height:1px;background:#454545"></div>
<div class="a" style="left:771px;top:379px;width:111px;height:18px;background:linear-gradient(#686868,#4e4e4e);border:1px solid #3a3a3a;border-radius:3px"></div>
<div class="t" style="left:780px;top:383px;font-size:11px;font-weight:bold;color:#f0f0f0">正常</div>
<svg class="a" style="left:872px;top:383px" width="6" height="10"><path d="M0 4L3 0L6 4ZM0 6L3 10L6 6Z" fill="#e0e0e0"/></svg>
<div class="t" style="left:892px;top:383px;font-size:11px;font-weight:bold;color:#f0f0f0">不透明度:</div>
<div class="a" style="left:949px;top:379px;width:37px;height:18px;background:#2d2d2d;border:1px solid #3c3c3c"></div>
<div class="t" style="left:952px;top:383px;font-size:11px;color:#f0f0f0">100%</div>
<div class="a" style="left:986px;top:379px;width:19px;height:18px;background:linear-gradient(#7a7a7a,#5c5c5c);border:1px solid #3a3a3a;border-radius:0 3px 3px 0"></div>
<svg class="a" style="left:992px;top:386px" width="7" height="4"><path d="M0 0H7L3.500 4Z" fill="#eee"/></svg>
<div class="a" style="left:767px;top:401px;width:242px;height:1px;background:#454545"></div>
<div class="t" style="left:772px;top:409px;font-size:11px;color:#8c8c8c;letter-spacing:.5px">锁定:</div>
<svg class="a" style="left:811px;top:409px" width="11" height="11" viewBox="0 0 11 11"><rect x=".5" y=".5" width="10" height="10" fill="#6a6a6a" stroke="#8a8a8a"/><path d="M1 1h3v3h-3zM7 1h3v3h-3zM4 4h3v3h-3zM1 7h3v3h-3zM7 7h3v3h-3z" fill="#9a9a9a"/></svg>
<svg class="a" style="left:832px;top:407px" width="16" height="14" viewBox="0 0 16 14"><path d="M15 0L16 1L8 9L6.500 7.500Z" fill="#8a8a8a"/><path d="M6 8L8 10C7 13 3 13 0 13C3 11.500 3 9 6 8Z" fill="#8a8a8a"/></svg>
<svg class="a" style="left:854px;top:407px" width="14" height="14" viewBox="0 0 14 14"><path d="M7 1V13M1 7H13" stroke="#8a8a8a" stroke-width="1.300"/><path d="M7 0L4.500 3H9.500ZM7 14L4.500 11H9.500ZM0 7L3 4.500V9.500ZM14 7L11 4.500V9.500Z" fill="#8a8a8a"/></svg>
<svg class="a" style="left:878px;top:407px" width="11" height="14" viewBox="0 0 11 14"><path d="M2.500 6V4a3 3 0 0 1 6 0V6" fill="none" stroke="#8a8a8a" stroke-width="1.600"/><rect x="0" y="6" width="11" height="8" rx="1" fill="#8a8a8a"/></svg>
<div class="t" style="left:915px;top:409px;font-size:11px;font-weight:bold;color:#f0f0f0;letter-spacing:.5px">填充:</div>
<div class="a" style="left:949px;top:406px;width:37px;height:18px;background:#2d2d2d;border:1px solid #3c3c3c"></div>
<div class="t" style="left:952px;top:410px;font-size:11px;color:#f0f0f0">100%</div>
<div class="a" style="left:986px;top:406px;width:19px;height:18px;background:linear-gradient(#7a7a7a,#5c5c5c);border:1px solid #3a3a3a;border-radius:0 3px 3px 0"></div>
<svg class="a" style="left:992px;top:413px" width="7" height="4"><path d="M0 0H7L3.500 4Z" fill="#eee"/></svg>
<div class="a" style="left:767px;top:429px;width:242px;height:296px;background:#474747"></div>
<div class="a" style="left:994px;top:429px;width:15px;height:296px;background:#3f3f3f;border-left:1px solid #383838"></div>
<div class="a" style="left:767px;top:430px;width:30px;height:27px;background:#505050;border-right:1px solid #3a3a3a"></div>
<div class="a" style="left:798px;top:430px;width:196px;height:27px;background:#4d5d76"></div>
<div class="a" style="left:767px;top:457px;width:227px;height:1px;background:#3a3a3a"></div>
<div class="a" style="left:767px;top:458px;width:30px;height:28px;background:#505050;border-right:1px solid #3a3a3a"></div>
<div class="a" style="left:798px;top:458px;width:196px;height:28px;background:#535353"></div>
<div class="a" style="left:767px;top:486px;width:227px;height:1px;background:#3a3a3a"></div>
<svg class="a" style="left:775px;top:439px" width="14" height="9" viewBox="0 0 14 9"><path d="M0 4.500C3 0 11 0 14 4.500C11 9 3 9 0 4.500Z" fill="#bdbdbd"/><circle cx="7" cy="4.500" r="2.300" fill="#4a4a4a"/><circle cx="7" cy="4.500" r="1" fill="#ccc"/></svg>
<svg class="a" style="left:775px;top:467px" width="14" height="9" viewBox="0 0 14 9"><path d="M0 4.500C3 0 11 0 14 4.500C11 9 3 9 0 4.500Z" fill="#bdbdbd"/><circle cx="7" cy="4.500" r="2.300" fill="#4a4a4a"/><circle cx="7" cy="4.500" r="1" fill="#ccc"/></svg>
<div class="a" style="left:801px;top:433px;width:32px;height:22px;background:#fff"></div>
<svg class="a" style="left:799px;top:431px" width="36" height="26" viewBox="0 0 36 26"><path d="M.500 6V.500H7M29 .500H35.500V6M35.500 20V25.500H29M7 25.500H.500V20" fill="none" stroke="#f4f4f4" stroke-width="1"/><path d="M16 4c2-1 3 0 3 2l1 6l2 1v8h-6v-7l-1 5l-1-1c0-5 1-10 2-14z" fill="#b07a3c"/></svg>
<div class="t" style="left:843px;top:440px;font-size:11px;font-weight:bold;color:#f0f0f0;letter-spacing:.5px">裁剪预览</div>
<div class="a" style="left:809px;top:464px;width:17px;height:16px;background:#fff;border:1px solid #222;border-bottom-width:2px"></div>
<div class="t" style="left:843px;top:468px;font-size:11px;font-weight:bold;color:#f0f0f0;letter-spacing:.5px">背景</div>
<div class="a" style="left:767px;top:725px;width:242px;height:20px;background:#535353;border-top:1px solid #3a3a3a"></div>
<svg class="a" style="left:802px;top:729px" width="14" height="10" viewBox="0 0 14 10"><rect x="1" y="2.500" width="7" height="5" rx="2.500" fill="none" stroke="#7a7a7a" stroke-width="1.400"/><rect x="6" y="2.500" width="7" height="5" rx="2.500" fill="none" stroke="#7a7a7a" stroke-width="1.400"/></svg>
<div class="t" style="left:833px;top:727px;font-family:'Liberation Serif',serif;font-style:italic;font-size:14px;color:#7a7a7a">fx</div>
<svg class="a" style="left:858px;top:728px" width="13" height="11"><rect width="13" height="11" fill="#7a7a7a"/><circle cx="6.500" cy="5.500" r="3" fill="#535353"/></svg>
<svg class="a" style="left:887px;top:728px" width="12" height="12" viewBox="0 0 12 12"><circle cx="6" cy="6" r="5.500" fill="#7a7a7a"/><path d="M2 10A5.500 5.500 0 0 1 10 2Z" fill="#535353"/></svg>
<svg class="a" style="left:913px;top:728px" width="14" height="11"><path d="M0 0H5L6.500 2H14V11H0Z" fill="#7a7a7a"/></svg>
<svg class="a" style="left:941px;top:728px" width="12" height="12"><path d="M0 0H12V12H4L0 8Z" fill="#7a7a7a"/><path d="M0 8H4V12Z" fill="#535353"/></svg>
<svg class="a" style="left:968px;top:727px" width="12" height="13" viewBox="0 0 12 13"><path d="M0 2.500H12M4 2V.500H8V2" stroke="#7a7a7a" stroke-width="1.300" fill="none"/><path d="M1 4H11L10 13H2Z" fill="#7a7a7a"/></svg>

<!--BOTTOM-->
</div></div>
<div class="a" style="left:0;top:743px;width:1010px;height:5px;background:linear-gradient(#3c3c3c,#1c1c1c 50%,#1c1c1c)"></div>
<div class="a" style="left:0;top:0;width:95px;height:2px;background:#1f2733"></div>
</body></html>
